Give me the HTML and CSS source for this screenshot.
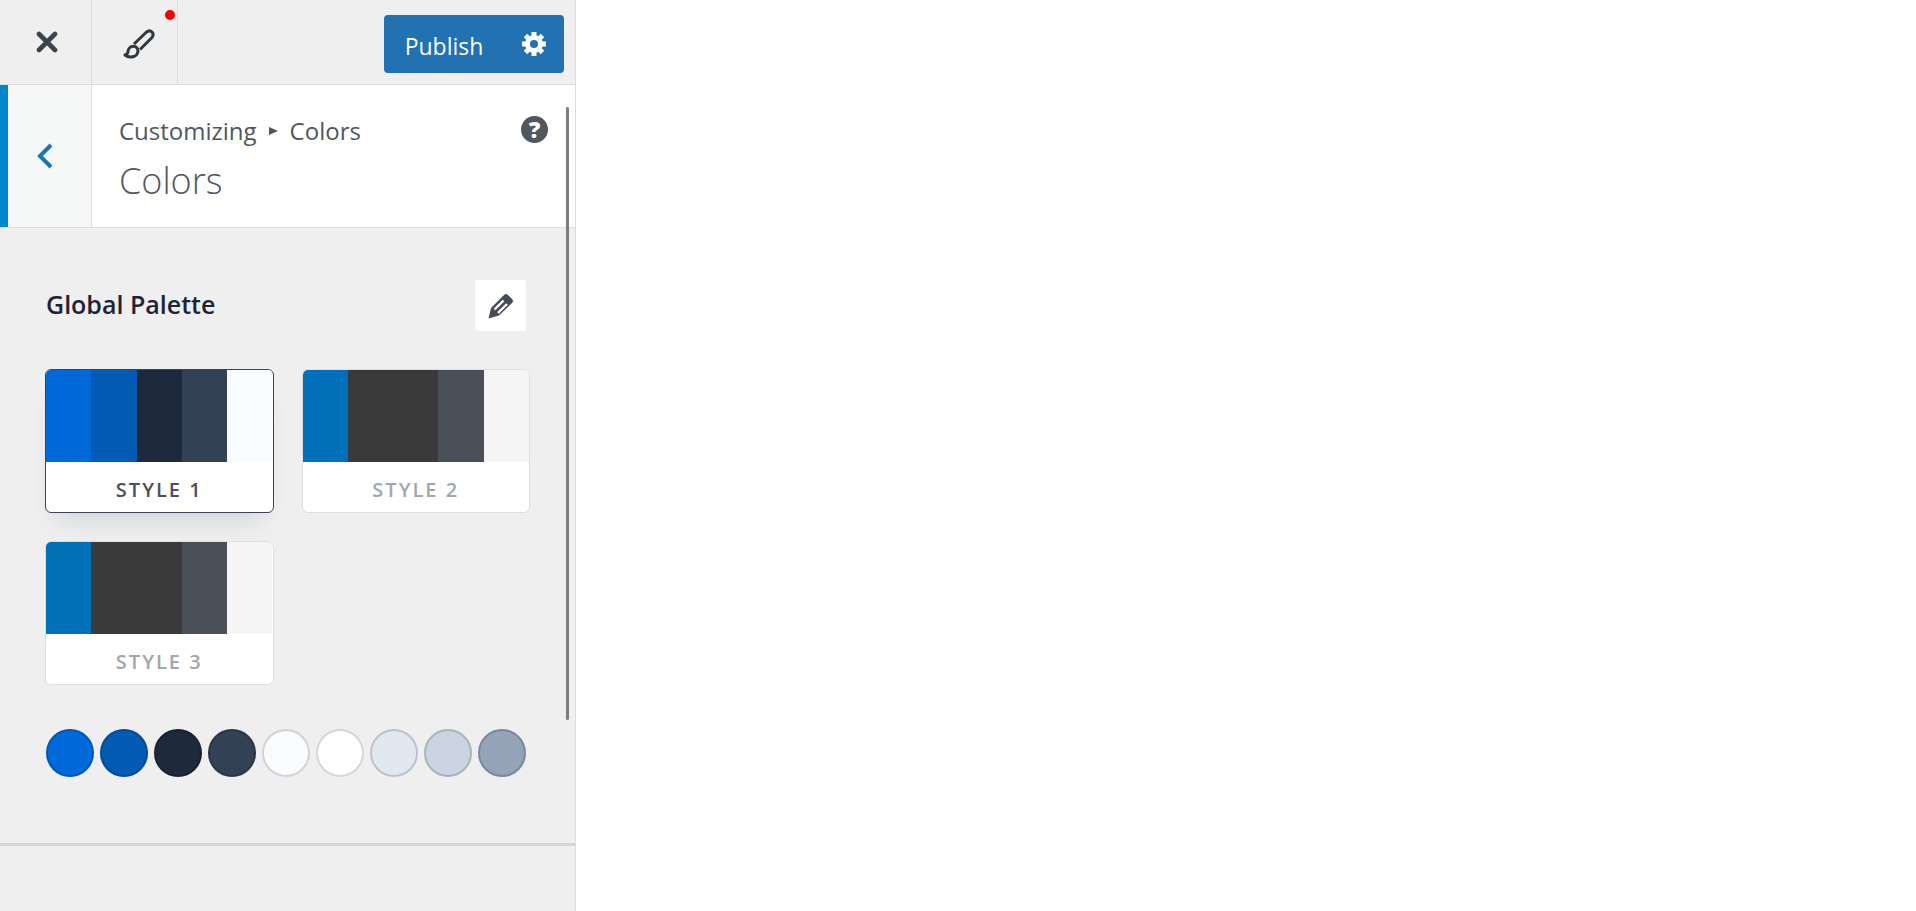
FILE: index.html
```
<!DOCTYPE html>
<html lang="en">
<head>
    <meta charset="UTF-8">
    <meta name="viewport" content="width=device-width, initial-scale=1.0">
    <title>Customize: Colors</title>
    <link rel="stylesheet" href="styles.css">
</head>
<body>
    <aside class="sidebar">
        <header class="toolbar">
            <button type="button" class="tool-btn" aria-label="Close">
                <svg width="22" height="22" viewBox="0 0 22 22"><path d="M3 3L19 19M19 3L3 19" fill="none" stroke="#3c434a" stroke-width="4.6" stroke-linecap="round"/></svg>
            </button>
            <button type="button" class="tool-btn tool-brush" aria-label="Styles">
                <svg width="32" height="32" viewBox="0 0 32 32" fill="none" stroke="#32373c" stroke-width="3" stroke-linejoin="round">
                    <path d="M11 16L23 4.5Q26.5 1.5 29 4Q31.500 6.5 28.5 10L17 21.5"/>
                    <path d="M6 20.5C8 17.500 12 17.5 14 20C16 23 14.500 27.5 11 28.500Q5.5 30 2 27Q5 26 5 23.5Q5 22 6 20.5Z"/>
                </svg>
                <span class="notice-dot"></span>
            </button>
            <div class="publish">
                <button type="button" class="publish-save">Publish</button>
                <button type="button" class="publish-settings" aria-label="Publish settings">
                    <svg width="24" height="24" viewBox="0 0 24 24" fill="none" stroke="#fff">
                        <circle cx="12" cy="12" r="6.5" stroke-width="5"/>
                        <path d="M12 0V4M12 20V24M0 12H4M20 12H24M3.5 3.5L6.5 6.5M17.5 17.5L20.5 20.5M20.5 3.5L17.5 6.5M6.5 17.5L3.5 20.5" stroke-width="5"/>
                    </svg>
                </button>
            </div>
        </header>

        <div class="section-title">
            <button type="button" class="back-btn" aria-label="Back">
                <svg width="16" height="26" viewBox="0 0 16 26"><path d="M14 2L3 13L14 24" fill="none" stroke="#1a74b8" stroke-width="4"/></svg>
            </button>
            <div class="section-text">
                <p class="breadcrumb">Customizing <svg width="9" height="10" viewBox="0 0 9 10"><path d="M0 1L9 5L0 9Z" fill="#50575e"/></svg> Colors</p>
                <h1>Colors</h1>
            </div>
            <button type="button" class="help-btn" aria-label="Help">?</button>
        </div>

        <main class="controls">
            <div class="palette-head">
                <h2>Global Palette</h2>
                <button type="button" class="edit-btn" aria-label="Edit palette">
                    <svg width="26" height="26" viewBox="0 0 26 26" fill="none">
                        <path d="M0.5 25.5L3 15L16 2Q18 0 20 2L24 6Q26 8 24 10L11 22.5Z" fill="#474b57"/>
                        <path d="M6.5 16.5L15.5 7.5M10 20L19 11" stroke="#fff" stroke-width="2.4"/>
                    </svg>
                </button>
            </div>

            <div class="palettes">
                <button type="button" class="palette active">
                    <span class="palette-colors">
                        <span class="blue"></span>
                        <span class="blue-dark"></span>
                        <span class="navy"></span>
                        <span class="slate"></span>
                        <span class="mist"></span>
                    </span>
                    <span class="palette-name">STYLE 1</span>
                </button>
                <button type="button" class="palette">
                    <span class="palette-colors">
                        <span class="ocean"></span>
                        <span class="charcoal"></span>
                        <span class="charcoal"></span>
                        <span class="gray"></span>
                        <span class="light"></span>
                    </span>
                    <span class="palette-name">STYLE 2</span>
                </button>
                <button type="button" class="palette">
                    <span class="palette-colors">
                        <span class="ocean"></span>
                        <span class="charcoal"></span>
                        <span class="charcoal"></span>
                        <span class="gray"></span>
                        <span class="light"></span>
                    </span>
                    <span class="palette-name">STYLE 3</span>
                </button>
            </div>

            <div class="swatches">
                <button type="button" class="swatch blue" aria-label="Color 1"></button>
                <button type="button" class="swatch blue-dark" aria-label="Color 2"></button>
                <button type="button" class="swatch navy" aria-label="Color 3"></button>
                <button type="button" class="swatch slate" aria-label="Color 4"></button>
                <button type="button" class="swatch mist" aria-label="Color 5"></button>
                <button type="button" class="swatch white" aria-label="Color 6"></button>
                <button type="button" class="swatch pale" aria-label="Color 7"></button>
                <button type="button" class="swatch silver" aria-label="Color 8"></button>
                <button type="button" class="swatch steel" aria-label="Color 9"></button>
            </div>
        </main>
        <div class="scroll-thumb"></div>
    </aside>
</body>
</html>
```

FILE: styles.css
```
* {
    margin: 0;
    padding: 0;
    box-sizing: border-box;
}

body {
    font-family: 'Open Sans', 'Noto Sans', sans-serif;
    background: #fff;
    color: #50575e;
    min-height: 100vh;
}

button {
    font-family: inherit;
    border: none;
    background: none;
    cursor: pointer;
}

svg {
    display: block;
}

.sidebar {
    position: relative;
    width: 576px;
    max-width: 100%;
    min-height: 100vh;
    background: #efefef;
    border-right: 1px solid #dcdcde;
}

/* top bar */
.toolbar {
    display: flex;
    height: 85px;
    border-bottom: 1px solid #dcdcdc;
}

.tool-btn {
    position: relative;
    width: 92px;
    display: flex;
    align-items: center;
    justify-content: center;
    padding-left: 2px;
    border-right: 1px solid #dcdcdc;
}

.tool-brush {
    width: 86px;
    padding-top: 4px;
    padding-left: 8px;
}

.notice-dot {
    position: absolute;
    top: 10px;
    right: 2px;
    width: 10px;
    height: 10px;
    border-radius: 50%;
    background: #f00;
}

.publish {
    display: flex;
    height: 58px;
    margin: 15px 11px 0 auto;
    border-radius: 4px;
    overflow: hidden;
    background: #2271b1;
}

.publish-save {
    width: 120px;
    padding-top: 4px;
    color: #fff;
    font-size: 23px;
}

.publish-settings {
    width: 60px;
    display: flex;
    align-items: center;
    justify-content: center;
}

/* section heading */
.section-title {
    display: flex;
    height: 143px;
    background: #fff;
    border-bottom: 1px solid #dcdcdc;
}

.back-btn {
    width: 92px;
    display: flex;
    align-items: center;
    justify-content: center;
    padding-right: 10px;
    background: #f6f7f7;
    border-left: 8px solid #0087cb;
    border-right: 1px solid #dcdcdc;
}

.section-text {
    flex: 1;
    padding: 28px 0 0 27px;
}

.breadcrumb {
    display: flex;
    align-items: center;
    gap: 12px;
    font-size: 24px;
    line-height: 36px;
}

.section-text h1 {
    font-size: 36px;
    font-weight: 300;
    line-height: 64px;
}

.help-btn {
    width: 27px;
    height: 27px;
    margin: 31px 27px 0 0;
    border-radius: 50%;
    background: #50575e;
    color: #fff;
    font-size: 23px;
    font-weight: 800;
    line-height: 27px;
}

/* palettes */
.controls {
    padding: 52px 45px 66px;
    border-bottom: 3px solid #d3d6d8;
}

.palette-head {
    display: flex;
    align-items: center;
    justify-content: space-between;
    padding: 0 4px 0 1px;
    margin-bottom: 38px;
}

.palette-head h2 {
    padding-bottom: 4px;
    color: #1e2338;
    font-size: 25px;
    font-weight: 600;
}

.edit-btn {
    width: 51px;
    height: 51px;
    display: flex;
    align-items: center;
    justify-content: center;
    background: #fff;
    border-radius: 3px;
}

.palettes {
    display: grid;
    grid-template-columns: 1fr 1fr;
    gap: 28px;
    margin-bottom: 44px;
}

.palette {
    height: 144px;
    background: #fff;
    border: 1px solid #dedede;
    border-radius: 6px;
    overflow: hidden;
    color: #a2a6ab;
}

.palette.active {
    border-color: #3d4257;
    color: #4b505b;
    box-shadow: 0 18px 24px -12px rgba(30, 41, 59, 0.14);
}

.palette-colors {
    display: flex;
    height: 92px;
}

.palette-colors span {
    flex: 1;
}

.palette-name {
    display: block;
    padding-top: 6px;
    font-size: 20px;
    font-weight: 600;
    line-height: 44px;
    letter-spacing: 2px;
}

.swatches {
    display: flex;
    justify-content: space-between;
    padding: 0 4px 0 1px;
}

.swatch {
    width: 48px;
    height: 48px;
    border-radius: 50%;
    box-shadow: inset 0 0 0 2px rgba(0, 0, 0, 0.16);
}

.blue { background: #0069d9; }
.blue-dark { background: #035ab3; }
.navy { background: #1e293b; }
.slate { background: #334155; }
.mist { background: #f9fbfe; }
.white { background: #fff; }
.pale { background: #e2e8f0; }
.silver { background: #cbd5e1; }
.steel { background: #94a3b8; }
.ocean { background: #0071b9; }
.charcoal { background: #3a3a3a; }
.gray { background: #4b4f58; }
.light { background: #f5f5f5; }

.scroll-thumb {
    position: absolute;
    top: 107px;
    right: 6px;
    width: 3px;
    height: 613px;
    border-radius: 2px;
    background: #7d7d7d;
}
```
